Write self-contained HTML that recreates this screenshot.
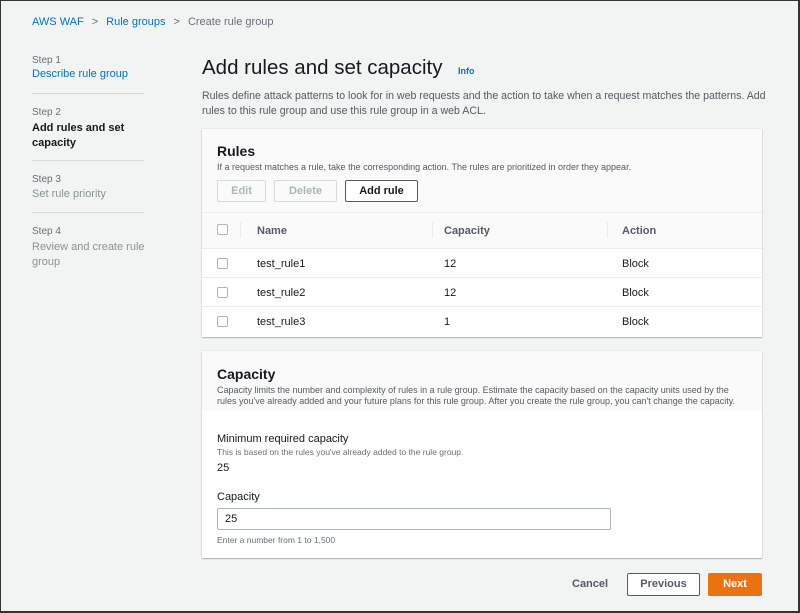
<!DOCTYPE html>
<html><head><style>
*{box-sizing:border-box;margin:0;padding:0}
body{width:800px;height:613px;background:#f2f3f3;font-family:"Liberation Sans",sans-serif;color:#16191f;position:relative;overflow:hidden}
.frame{position:absolute;left:0;top:0;width:800px;height:613px;border:1px solid #333;border-width:1px 2px 2px 1px;pointer-events:none;z-index:9}
.a{position:absolute;white-space:nowrap}
.link{color:#0073bb}
.grey{color:#687078}
.sep{position:absolute;left:32px;width:112px;height:1px;background:#d5dbdb}
.card{position:absolute;left:202px;width:560px;background:#fff;box-shadow:0 1px 1px rgba(0,0,0,.25),0 0 1px rgba(0,0,0,.2)}
.btn{position:absolute;height:22px;border:1px solid #d5dbdb;border-radius:2px;font-size:11px;font-weight:bold;text-align:center;line-height:20px;color:#aab7b8;background:#fafafa}
.cb{position:absolute;left:15px;width:11px;height:11px;border:1px solid #aab7b8;border-radius:2px;background:#fff}
.row{position:absolute;left:0;width:560px;height:29px;border-top:1px solid #eaeded;font-size:11px}
.row span{position:absolute;top:9px}
</style></head><body>
<div class="frame"></div>
<div class="a" style="left:32px;top:16px;font-size:11px"><span class="link">AWS WAF</span><span class="grey" style="margin:0 8px">&gt;</span><span class="link">Rule groups</span><span class="grey" style="margin:0 8px">&gt;</span><span class="grey">Create rule group</span></div>

<div class="a grey" style="left:32px;top:55px;font-size:10px">Step 1</div>
<div class="a link" style="left:32px;top:68px;font-size:11px">Describe rule group</div>
<div class="sep" style="top:93px"></div>
<div class="a grey" style="left:32px;top:107px;font-size:10px">Step 2</div>
<div class="a" style="left:32px;top:121px;font-size:11px;font-weight:bold;line-height:15px">Add rules and set<br>capacity</div>
<div class="sep" style="top:160px"></div>
<div class="a grey" style="left:32px;top:174px;font-size:10px">Step 3</div>
<div class="a" style="left:32px;top:188px;font-size:11px;color:#879596">Set rule priority</div>
<div class="sep" style="top:212px"></div>
<div class="a grey" style="left:32px;top:226px;font-size:10px">Step 4</div>
<div class="a" style="left:32px;top:240px;font-size:11px;color:#879596;line-height:15px">Review and create rule<br>group</div>

<div class="a" style="left:202px;top:56px;font-size:20.5px">Add rules and set capacity</div>
<div class="a link" style="left:458px;top:66px;font-size:9px;font-weight:bold">Info</div>
<div class="a" style="left:202px;top:89px;font-size:10.6px;color:#545b64;line-height:15px">Rules define attack patterns to look for in web requests and the action to take when a request matches the patterns. Add<br>rules to this rule group and use this rule group in a web ACL.</div>

<div class="card" style="top:129px;height:208px">
 <div style="position:absolute;left:0;top:0;width:560px;height:119px;background:#fafafa"></div>
 <div class="a" style="left:15px;top:14px;font-size:14px;font-weight:bold">Rules</div>
 <div class="a" style="left:15px;top:33px;font-size:9px;color:#545b64">If a request matches a rule, take the corresponding action. The rules are prioritized in order they appear.</div>
 <div class="btn" style="left:15px;top:51px;width:49px">Edit</div>
 <div class="btn" style="left:72px;top:51px;width:63px">Delete</div>
 <div class="btn" style="left:143px;top:51px;width:73px;border-color:#545b64;color:#16191f;background:#fff">Add rule</div>
 <div style="position:absolute;left:0;top:83px;width:560px;height:36px;border-top:1px solid #eaeded"></div>
 <div class="cb" style="top:95px"></div>
 <div style="position:absolute;left:38px;top:93px;width:1px;height:16px;background:#eaeded"></div>
 <div style="position:absolute;left:230px;top:93px;width:1px;height:16px;background:#eaeded"></div>
 <div style="position:absolute;left:405px;top:93px;width:1px;height:16px;background:#eaeded"></div>
 <div class="a" style="left:55px;top:96px;font-size:11px;font-weight:bold;color:#545b64">Name</div>
 <div class="a" style="left:242px;top:96px;font-size:11px;font-weight:bold;color:#545b64">Capacity</div>
 <div class="a" style="left:420px;top:96px;font-size:11px;font-weight:bold;color:#545b64">Action</div>
 <div class="row" style="top:119px"><div class="cb" style="top:9px"></div><span style="left:55px">test_rule1</span><span style="left:242px">12</span><span style="left:420px">Block</span></div>
 <div class="row" style="top:148px"><div class="cb" style="top:9px"></div><span style="left:55px">test_rule2</span><span style="left:242px">12</span><span style="left:420px">Block</span></div>
 <div class="row" style="top:177px"><div class="cb" style="top:9px"></div><span style="left:55px">test_rule3</span><span style="left:242px">1</span><span style="left:420px">Block</span></div>
</div>

<div class="card" style="top:351px;height:207px">
 <div style="position:absolute;left:0;top:0;width:560px;height:60px;background:#fafafa"></div>
 <div class="a" style="left:15px;top:15px;font-size:14px;font-weight:bold">Capacity</div>
 <div class="a" style="left:15px;top:34px;font-size:9px;color:#545b64;line-height:11px">Capacity limits the number and complexity of rules in a rule group. Estimate the capacity based on the capacity units used by the<br>rules you've already added and your future plans for this rule group. After you create the rule group, you can't change the capacity.</div>
 <div class="a" style="left:15px;top:82px;font-size:11px">Minimum required capacity</div>
 <div class="a" style="left:15px;top:96px;font-size:8.5px;color:#687078">This is based on the rules you've already added to the rule group.</div>
 <div class="a" style="left:15px;top:111px;font-size:11px">25</div>
 <div class="a" style="left:15px;top:140px;font-size:11px">Capacity</div>
 <div style="position:absolute;left:15px;top:157px;width:394px;height:22px;border:1px solid #aab7b8;border-radius:2px;font-size:11px;line-height:20px;padding-left:7px">25</div>
 <div class="a" style="left:15px;top:184px;font-size:8.5px;color:#687078">Enter a number from 1 to 1,500</div>
</div>

<div class="a" style="left:572px;top:578px;font-size:11px;font-weight:bold;color:#545b64">Cancel</div>
<div style="position:absolute;left:627px;top:573px;width:73px;height:23px;border:1px solid #545b64;border-radius:2px;background:#fff;font-size:11px;font-weight:bold;color:#545b64;text-align:center;line-height:21px">Previous</div>
<div style="position:absolute;left:708px;top:573px;width:54px;height:23px;border-radius:2px;background:#ec7211;font-size:11px;font-weight:bold;color:#fff;text-align:center;line-height:23px">Next</div>
</body></html>
